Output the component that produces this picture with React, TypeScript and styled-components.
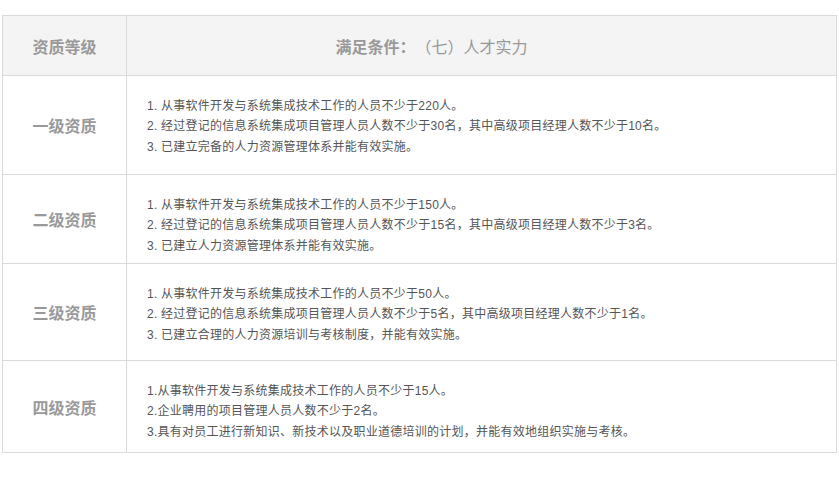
import React from "react";
import styled, { createGlobalStyle } from "styled-components";

const GlobalStyle = createGlobalStyle`
  html, body {
    margin: 0;
    padding: 0;
    background: #ffffff;
  }
  body {
    font-family: "Liberation Sans", "Noto Sans CJK SC", sans-serif;
  }
`;

const Page = styled.div`
  padding: 15px 0 0 2px;
`;

const Table = styled.div`
  box-sizing: border-box;
  width: 835px;
  border: 1px solid #dadada;
`;

const Row = styled.div<{ $height: number; $head?: boolean }>`
  box-sizing: border-box;
  display: grid;
  grid-template-columns: 124px 1fr;
  height: ${(p) => p.$height}px;
  border-top: ${(p) => (p.$head ? "none" : "1px solid #dadada")};
  background: ${(p) => (p.$head ? "#f4f4f4" : "#ffffff")};
`;

const LevelCell = styled.div`
  box-sizing: border-box;
  border-right: 1px solid #dadada;
  display: flex;
  align-items: center;
  justify-content: center;
  font-size: 16px;
  font-weight: bold;
  color: #999999;
`;

const HeadTitle = styled.div`
  display: flex;
  align-items: center;
  justify-content: center;
  padding-right: 100px;
  font-size: 16px;
  color: #999999;

  b {
    font-weight: bold;
  }
`;

const Conditions = styled.div`
  padding: 20px 0 0 20px;
  font-size: 12px;
  line-height: 20.4px;
  letter-spacing: 0.25px;
  color: #555555;

  p {
    margin: 0;
    white-space: nowrap;
  }
`;

type Level = {
  name: string;
  height: number;
  items: string[];
};

const levels: Level[] = [
  {
    name: "一级资质",
    height: 99,
    items: [
      "1. 从事软件开发与系统集成技术工作的人员不少于220人。",
      "2. 经过登记的信息系统集成项目管理人员人数不少于30名，其中高级项目经理人数不少于10名。",
      "3. 已建立完备的人力资源管理体系并能有效实施。",
    ],
  },
  {
    name: "二级资质",
    height: 89,
    items: [
      "1. 从事软件开发与系统集成技术工作的人员不少于150人。",
      "2. 经过登记的信息系统集成项目管理人员人数不少于15名，其中高级项目经理人数不少于3名。",
      "3. 已建立人力资源管理体系并能有效实施。",
    ],
  },
  {
    name: "三级资质",
    height: 97,
    items: [
      "1. 从事软件开发与系统集成技术工作的人员不少于50人。",
      "2. 经过登记的信息系统集成项目管理人员人数不少于5名，其中高级项目经理人数不少于1名。",
      "3. 已建立合理的人力资源培训与考核制度，并能有效实施。",
    ],
  },
  {
    name: "四级资质",
    height: 92,
    items: [
      "1.从事软件开发与系统集成技术工作的人员不少于15人。",
      "2.企业聘用的项目管理人员人数不少于2名。",
      "3.具有对员工进行新知识、新技术以及职业道德培训的计划，并能有效地组织实施与考核。",
    ],
  },
];

export default function App() {
  return (
    <Page>
      <GlobalStyle />
      <Table>
        <Row $height={59} $head>
          <LevelCell>资质等级</LevelCell>
          <HeadTitle>
            <b>满足条件：</b>（七）人才实力
          </HeadTitle>
        </Row>
        {levels.map((level) => (
          <Row key={level.name} $height={level.height}>
            <LevelCell>{level.name}</LevelCell>
            <Conditions>
              {level.items.map((item) => (
                <p key={item}>{item}</p>
              ))}
            </Conditions>
          </Row>
        ))}
      </Table>
    </Page>
  );
}
